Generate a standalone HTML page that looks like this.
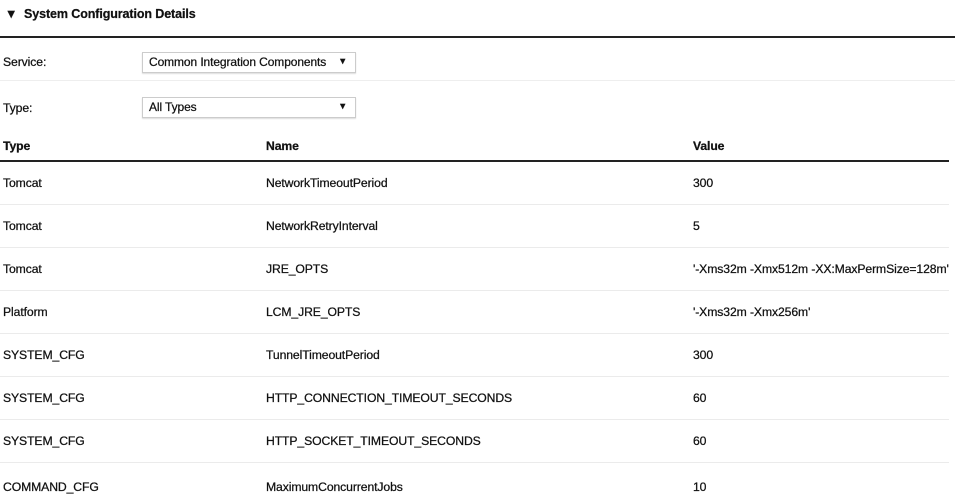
<!DOCTYPE html>
<html><head><style>
*{margin:0;padding:0;box-sizing:border-box}
body{width:955px;height:502px;background:#fff;font-family:"Liberation Sans",sans-serif;font-size:12.2px;color:#111;position:relative;overflow:hidden;letter-spacing:-0.1px;-webkit-text-stroke:0.25px #111}
.a{position:absolute;white-space:nowrap}
.b{font-weight:bold}
.line{position:absolute;left:0;height:1px;background:#ebebeb}
.sel{position:absolute;left:142px;width:214px;height:21px;border:1px solid #ccc;box-shadow:0 1px 1px #ddd;padding:2px 6px;font-size:12px}
.sel span{position:absolute;right:8px;top:3px;font-size:9px}
</style></head><body>
<div class="a b" style="left:5px;top:7px;font-size:12.5px">▼ &nbsp;System Configuration Details</div>
<div style="position:absolute;left:0;top:36px;width:955px;height:2px;background:#222"></div>
<div class="a" style="left:3px;top:55px">Service:</div>
<div class="sel" style="top:52px">Common Integration Components<span>▼</span></div>
<div class="line" style="top:80px;width:955px;background:#eee"></div>
<div class="a" style="left:3px;top:101px">Type:</div>
<div class="sel" style="top:97px">All Types<span>▼</span></div>
<div class="a b" style="left:3px;top:139px">Type</div>
<div class="a b" style="left:266px;top:139px">Name</div>
<div class="a b" style="left:693px;top:139px">Value</div>
<div style="position:absolute;left:0;top:160px;width:949px;height:2px;background:#222"></div>

<div class="a" style="left:3px;top:176px">Tomcat</div><div class="a" style="left:266px;top:176px">NetworkTimeoutPeriod</div><div class="a" style="left:693px;top:176px">300</div>
<div class="line" style="top:204px;width:949px"></div>
<div class="a" style="left:3px;top:219px">Tomcat</div><div class="a" style="left:266px;top:219px">NetworkRetryInterval</div><div class="a" style="left:693px;top:219px">5</div>
<div class="line" style="top:247px;width:949px"></div>
<div class="a" style="left:3px;top:262px">Tomcat</div><div class="a" style="left:266px;top:262px">JRE_OPTS</div><div class="a" style="left:693px;top:262px">'-Xms32m -Xmx512m -XX:MaxPermSize=128m'</div>
<div class="line" style="top:290px;width:949px"></div>
<div class="a" style="left:3px;top:305px">Platform</div><div class="a" style="left:266px;top:305px">LCM_JRE_OPTS</div><div class="a" style="left:693px;top:305px">'-Xms32m -Xmx256m'</div>
<div class="line" style="top:333px;width:949px"></div>
<div class="a" style="left:3px;top:348px">SYSTEM_CFG</div><div class="a" style="left:266px;top:348px">TunnelTimeoutPeriod</div><div class="a" style="left:693px;top:348px">300</div>
<div class="line" style="top:376px;width:949px"></div>
<div class="a" style="left:3px;top:391px">SYSTEM_CFG</div><div class="a" style="left:266px;top:391px">HTTP_CONNECTION_TIMEOUT_SECONDS</div><div class="a" style="left:693px;top:391px">60</div>
<div class="line" style="top:419px;width:949px"></div>
<div class="a" style="left:3px;top:434px">SYSTEM_CFG</div><div class="a" style="left:266px;top:434px">HTTP_SOCKET_TIMEOUT_SECONDS</div><div class="a" style="left:693px;top:434px">60</div>
<div class="line" style="top:462px;width:949px"></div>
<div class="a" style="left:3px;top:480px">COMMAND_CFG</div><div class="a" style="left:266px;top:480px">MaximumConcurrentJobs</div><div class="a" style="left:693px;top:480px">10</div>
</body></html>
